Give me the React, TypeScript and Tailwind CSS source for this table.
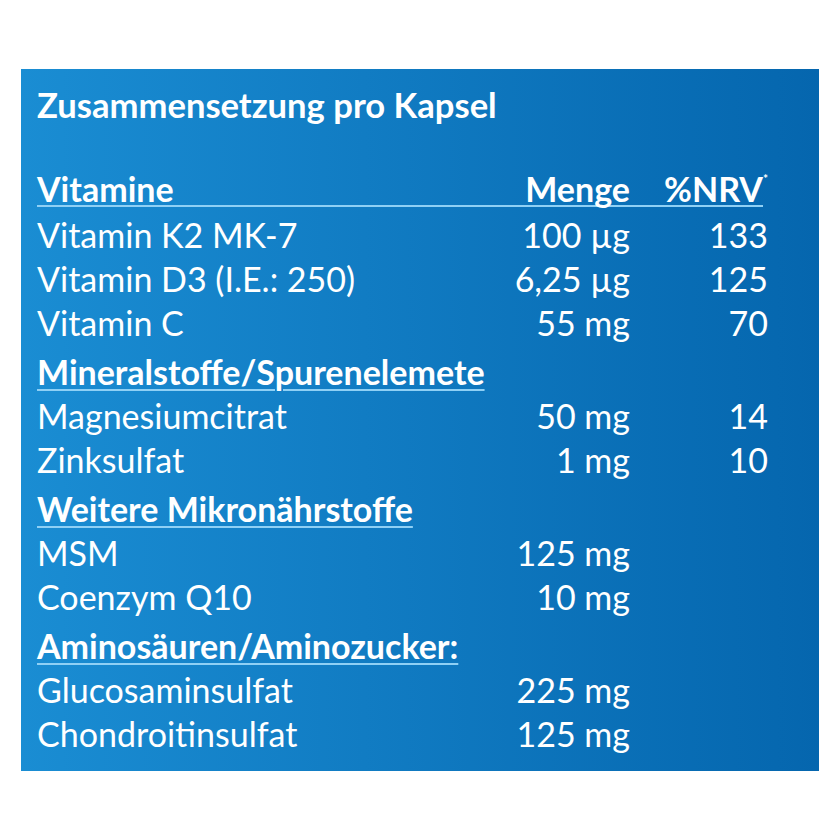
const rows: Array<
  | { type: "head"; label: string }
  | { type: "row"; name: string; amount: string; nrv?: string }
> = [
  { type: "row", name: "Vitamin K2 MK-7", amount: "100 µg", nrv: "133" },
  { type: "row", name: "Vitamin D3 (I.E.: 250)", amount: "6,25 µg", nrv: "125" },
  { type: "row", name: "Vitamin C", amount: "55 mg", nrv: "70" },
  { type: "head", label: "Mineralstoffe/Spurenelemete" },
  { type: "row", name: "Magnesiumcitrat", amount: "50 mg", nrv: "14" },
  { type: "row", name: "Zinksulfat", amount: "1 mg", nrv: "10" },
  { type: "head", label: "Weitere Mikronährstoffe" },
  { type: "row", name: "MSM", amount: "125 mg" },
  { type: "row", name: "Coenzym Q10", amount: "10 mg" },
  { type: "head", label: "Aminosäuren/Aminozucker:" },
  { type: "row", name: "Glucosaminsulfat", amount: "225 mg" },
  { type: "row", name: "Chondroitinsulfat", amount: "125 mg" },
];

export default function App() {
  return (
    <div className="min-h-screen bg-white px-[21px] pt-[69px] font-['Lato',sans-serif] text-white">
      <div className="h-[702px] w-[798px] bg-gradient-to-r from-[#1a8dd3] to-[#0566ae] pl-4 pr-[51px] pt-[14px]">
        <h1 className="h-[44px] text-[34.6px] font-bold leading-[44px]">
          Zusammensetzung pro Kapsel
        </h1>

        <div className="mt-[41px] flex h-[44px] items-center">
          <div className="mr-[5px] flex w-full border-b-2 border-[#8fd0f5] text-[34px] font-bold leading-[32px]">
            <span className="flex-1">Vitamine</span>
            <span className="w-[160px] text-right">Menge</span>
            <span className="-mr-[5px] w-[138px] text-right">
              %NRV<span className="align-top text-[12px] leading-none">*</span>
            </span>
          </div>
        </div>

        {rows.map((r, i) =>
          r.type === "head" ? (
            <div
              key={i}
              className="mt-[5px] flex h-[44px] items-center text-[34px] font-bold underline decoration-[#8fd0f5] decoration-2 underline-offset-[4px]"
            >
              {r.label}
            </div>
          ) : (
            <div key={i} className="flex h-[44px] items-center text-[34px]">
              <span className="flex-1">{r.name}</span>
              <span className="w-[160px] text-right">{r.amount}</span>
              <span className="w-[138px] text-right">{r.nrv ?? ""}</span>
            </div>
          ),
        )}
      </div>
    </div>
  );
}
